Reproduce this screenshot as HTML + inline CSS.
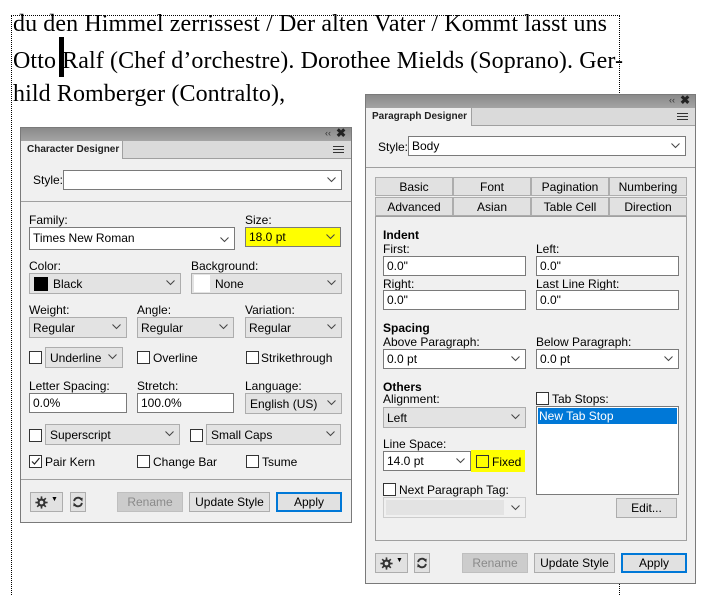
<!DOCTYPE html>
<html><head><meta charset="utf-8"><style>
*{box-sizing:border-box;margin:0;padding:0}
body{width:706px;height:595px;background:#fff;position:relative;overflow:hidden;font-family:"Liberation Sans",Arial,sans-serif;font-size:12px;color:#000}
.a{position:absolute}
.txt{font-family:"Liberation Serif","Times New Roman",serif;font-size:24px;white-space:nowrap;letter-spacing:0.1px}
.panel{position:absolute;background:#f0f0f0;border:1px solid #7a7a7a}
.tb{position:absolute;left:0;right:0;top:0;height:13px;background:linear-gradient(#8a8a8a,#a4a4a4)}
.tabrow{position:absolute;left:0;right:0;top:13px;height:18px;background:#dadada;border-bottom:1px solid #a0a0a0}
.tab{position:absolute;left:0;top:0;height:18px;background:#f0f0f0;border-right:1px solid #a0a0a0;font-size:10px;font-weight:bold;padding:3px 0 0 6px;color:#222;white-space:nowrap;overflow:hidden}
.inp{position:absolute;background:#fff;border:1px solid #7a7a7a;height:20px;padding:2px 0 0 3px;white-space:nowrap}
.dd{position:absolute;background:#e3e3e3;border:1px solid #adadad;height:21px;padding:3px 0 0 3px;white-space:nowrap}
.chev{position:absolute;right:5px;top:6px;width:9px;height:6px}
.lbl{position:absolute;white-space:nowrap}
.cb{position:absolute;width:13px;height:13px;background:#fff;border:1px solid #333}
.btn{position:absolute;height:20px;background:#e1e1e1;border:1px solid #adadad;text-align:center;padding-top:2px;white-space:nowrap}
.sep{position:absolute;height:1px;background:#a0a0a0}
.ptab{position:absolute;height:19px;background:#e1e1e1;border:1px solid #adadad;text-align:center;padding-top:2px}
b.h{position:absolute;font-size:12px}
</style></head><body>
<svg width="0" height="0" style="position:absolute"><defs>
<symbol id="cv" viewBox="0 0 9 6"><path d="M0.5 0.5L4.5 4.5L8.5 0.5" fill="none" stroke="#444" stroke-width="1"/></symbol>
<symbol id="gear" viewBox="0 0 16 16"><g fill="#333"><circle cx="8" cy="8" r="5"/><rect x="7" y="0.5" width="2" height="15"/><rect x="0.5" y="7" width="15" height="2"/><rect x="7" y="0.5" width="2" height="15" transform="rotate(45 8 8)"/><rect x="7" y="0.5" width="2" height="15" transform="rotate(-45 8 8)"/></g><circle cx="8" cy="8" r="2.3" fill="#e1e1e1"/></symbol>
<symbol id="ref" viewBox="0 0 14 14"><path d="M2.5 6A4.6 4.6 0 0 1 11 4.2" fill="none" stroke="#333" stroke-width="2.2"/><path d="M8.5 2.5L12.5 2L12 6.5Z" fill="#333"/><path d="M11.5 8A4.6 4.6 0 0 1 3 9.8" fill="none" stroke="#333" stroke-width="2.2"/><path d="M5.5 11.5L1.5 12L2 7.5Z" fill="#333"/></symbol>
</defs></svg>

<div class="a" style="left:11px;top:15px;width:609px;height:0;border-top:1px dotted #000"></div>
<div class="a" style="left:11px;top:15px;width:0;height:580px;border-left:1px dotted #000"></div>
<div class="a" style="left:619px;top:15px;width:0;height:580px;border-left:1px dotted #000"></div>

<div class="a txt" style="left:13px;top:11px">du den Himmel zerrissest / Der alten Vater / Kommt lasst uns</div>
<div class="a txt" style="left:13px;top:48px">Otto Ralf (Chef d’orchestre). Dorothee Mields (Soprano). Ger-</div>
<div class="a txt" style="left:13px;top:81px">hild Romberger (Contralto),</div>
<div class="a" style="left:59px;top:37px;width:5px;height:40px;background:#000"></div>

<div class="panel" style="left:20px;top:127px;width:332px;height:396px">
 <div class="tb"><span class="a" style="right:20px;top:0px;font-size:9px;color:#333">‹‹</span><span class="a" style="right:5px;top:-2px;font-size:12px;font-weight:bold;color:#222">✖</span></div>
 <div class="tabrow"><div class="tab" style="width:102px">Character Designer</div>
  <div class="a" style="right:7px;top:5px;width:11px;height:7px;border-top:1px solid #333;border-bottom:1px solid #333"><div style="margin-top:2px;border-top:1px solid #333"></div></div></div>
</div>
<div class="lbl" style="left:33px;top:173px">Style:</div>
<div class="inp" style="left:63px;top:170px;width:279px"><svg class="chev"><use href="#cv"/></svg></div>
<div class="sep" style="left:21px;top:201px;width:330px"></div>
<div class="lbl" style="left:29px;top:213px">Family:</div>
<div class="inp" style="left:29px;top:227px;width:206px;height:23px;padding-top:3px">Times New Roman<svg class="chev" style="top:9px"><use href="#cv"/></svg></div>
<div class="lbl" style="left:245px;top:213px">Size:</div>
<div class="inp" style="left:245px;top:227px;width:96px;background:#ffff00">18.0 pt<svg class="chev"><use href="#cv"/></svg></div>
<div class="lbl" style="left:29px;top:259px">Color:</div>
<div class="dd" style="left:29px;top:273px;width:152px;padding-left:23px">Black<div class="a" style="left:4px;top:3px;width:14px;height:14px;background:#000"></div><svg class="chev"><use href="#cv"/></svg></div>
<div class="lbl" style="left:191px;top:259px">Background:</div>
<div class="dd" style="left:191px;top:273px;width:151px;padding-left:23px">None<div class="a" style="left:2px;top:1px;width:16px;height:17px;background:#fff"></div><svg class="chev"><use href="#cv"/></svg></div>
<div class="lbl" style="left:29px;top:303px">Weight:</div>
<div class="lbl" style="left:137px;top:303px">Angle:</div>
<div class="lbl" style="left:245px;top:303px">Variation:</div>
<div class="dd" style="left:29px;top:317px;width:98px">Regular<svg class="chev"><use href="#cv"/></svg></div>
<div class="dd" style="left:137px;top:317px;width:97px">Regular<svg class="chev"><use href="#cv"/></svg></div>
<div class="dd" style="left:245px;top:317px;width:97px">Regular<svg class="chev"><use href="#cv"/></svg></div>
<div class="cb" style="left:29px;top:351px"></div>
<div class="dd" style="left:45px;top:347px;width:78px;padding-left:4px">Underline<svg class="chev"><use href="#cv"/></svg></div>
<div class="cb" style="left:137px;top:351px"></div><div class="lbl" style="left:153px;top:351px">Overline</div>
<div class="cb" style="left:246px;top:351px"></div><div class="lbl" style="left:261px;top:351px">Strikethrough</div>
<div class="lbl" style="left:29px;top:379px">Letter Spacing:</div>
<div class="lbl" style="left:137px;top:379px">Stretch:</div>
<div class="lbl" style="left:245px;top:379px">Language:</div>
<div class="inp" style="left:29px;top:393px;width:98px">0.0%</div>
<div class="inp" style="left:137px;top:393px;width:97px">100.0%</div>
<div class="dd" style="left:245px;top:393px;width:97px;padding-left:4px">English (US)<svg class="chev"><use href="#cv"/></svg></div>
<div class="cb" style="left:29px;top:429px"></div>
<div class="dd" style="left:45px;top:424px;width:135px;padding-left:4px">Superscript<svg class="chev"><use href="#cv"/></svg></div>
<div class="cb" style="left:190px;top:429px"></div>
<div class="dd" style="left:206px;top:424px;width:135px;padding-left:4px">Small Caps<svg class="chev"><use href="#cv"/></svg></div>
<div class="cb" style="left:29px;top:455px"><svg width="11" height="11" style="position:absolute;left:0;top:0"><path d="M2 5.5L4.5 8L9.5 2" fill="none" stroke="#222" stroke-width="1.2"/></svg></div><div class="lbl" style="left:45px;top:455px">Pair Kern</div>
<div class="cb" style="left:137px;top:455px"></div><div class="lbl" style="left:153px;top:455px">Change Bar</div>
<div class="cb" style="left:246px;top:455px"></div><div class="lbl" style="left:262px;top:455px">Tsume</div>
<div class="sep" style="left:21px;top:479px;width:330px"></div>
<div class="btn" style="left:30px;top:492px;width:33px"><svg width="13" height="13" style="position:absolute;left:4px;top:3px"><use href="#gear"/></svg><span class="a" style="left:20px;top:3px;font-size:7px">▼</span></div>
<div class="btn" style="left:70px;top:492px;width:16px"><svg width="12" height="12" style="position:absolute;left:1px;top:3px"><use href="#ref"/></svg></div>
<div class="btn" style="left:117px;top:492px;width:66px;background:#cccccc;color:#8a8a8a;border-color:#bfbfbf">Rename</div>
<div class="btn" style="left:189px;top:492px;width:81px">Update Style</div>
<div class="btn" style="left:276px;top:492px;width:66px;border:2px solid #0078d7;padding-top:1px">Apply</div>

<div class="panel" style="left:365px;top:94px;width:331px;height:490px">
 <div class="tb"><span class="a" style="right:20px;top:0px;font-size:9px;color:#333">‹‹</span><span class="a" style="right:5px;top:-2px;font-size:12px;font-weight:bold;color:#222">✖</span></div>
 <div class="tabrow"><div class="tab" style="width:106px">Paragraph Designer</div>
  <div class="a" style="right:7px;top:5px;width:11px;height:7px;border-top:1px solid #333;border-bottom:1px solid #333"><div style="margin-top:2px;border-top:1px solid #333"></div></div></div>
</div>
<div class="lbl" style="left:378px;top:140px">Style:</div>
<div class="inp" style="left:408px;top:136px;width:278px">Body<svg class="chev"><use href="#cv"/></svg></div>
<div class="sep" style="left:366px;top:167px;width:329px"></div>
<div class="ptab" style="left:375px;top:177px;width:78px">Basic</div>
<div class="ptab" style="left:453px;top:177px;width:78px">Font</div>
<div class="ptab" style="left:531px;top:177px;width:78px">Pagination</div>
<div class="ptab" style="left:609px;top:177px;width:78px">Numbering</div>
<div class="ptab" style="left:375px;top:197px;width:78px">Advanced</div>
<div class="ptab" style="left:453px;top:197px;width:78px">Asian</div>
<div class="ptab" style="left:531px;top:197px;width:78px">Table Cell</div>
<div class="ptab" style="left:609px;top:197px;width:78px">Direction</div>
<div class="a" style="left:375px;top:216px;width:312px;height:325px;border:1px solid #a0a0a0;background:#f0f0f0"></div>
<b class="h" style="left:383px;top:228px">Indent</b>
<div class="lbl" style="left:383px;top:242px">First:</div>
<div class="lbl" style="left:536px;top:242px">Left:</div>
<div class="inp" style="left:383px;top:256px;width:143px">0.0"</div>
<div class="inp" style="left:536px;top:256px;width:143px">0.0"</div>
<div class="lbl" style="left:383px;top:277px">Right:</div>
<div class="lbl" style="left:536px;top:277px">Last Line Right:</div>
<div class="inp" style="left:383px;top:290px;width:143px">0.0"</div>
<div class="inp" style="left:536px;top:290px;width:143px">0.0"</div>
<b class="h" style="left:383px;top:321px">Spacing</b>
<div class="lbl" style="left:383px;top:335px">Above Paragraph:</div>
<div class="lbl" style="left:536px;top:335px">Below Paragraph:</div>
<div class="inp" style="left:383px;top:349px;width:143px">0.0 pt<svg class="chev"><use href="#cv"/></svg></div>
<div class="inp" style="left:536px;top:349px;width:143px">0.0 pt<svg class="chev"><use href="#cv"/></svg></div>
<b class="h" style="left:383px;top:380px">Others</b>
<div class="lbl" style="left:383px;top:392px">Alignment:</div>
<div class="dd" style="left:383px;top:407px;width:143px">Left<svg class="chev"><use href="#cv"/></svg></div>
<div class="cb" style="left:536px;top:392px"></div><div class="lbl" style="left:552px;top:392px">Tab Stops:</div>
<div class="a" style="left:536px;top:406px;width:143px;height:89px;background:#fff;border:1px solid #7a7a7a"><div style="margin:1px;height:16px;background:#0078d7;color:#fff;padding:1px 0 0 1px">New Tab Stop</div></div>
<div class="lbl" style="left:383px;top:437px">Line Space:</div>
<div class="inp" style="left:383px;top:451px;width:88px">14.0 pt<svg class="chev"><use href="#cv"/></svg></div>
<div class="a" style="left:471px;top:450px;width:54px;height:22px;background:#ffff00"></div>
<div class="cb" style="left:476px;top:455px;background:#ffff00"></div><div class="lbl" style="left:492px;top:455px">Fixed</div>
<div class="cb" style="left:383px;top:483px"></div><div class="lbl" style="left:399px;top:483px">Next Paragraph Tag:</div>
<div class="a" style="left:383px;top:497px;width:143px;height:21px;background:#f0f0f0;border:1px solid #ccc"><div style="margin:2px;width:118px;height:15px;background:#e3e3e3"></div><svg class="chev" style="top:7px"><use href="#cv"/></svg></div>
<div class="btn" style="left:616px;top:498px;width:61px">Edit...</div>
<div class="btn" style="left:375px;top:553px;width:33px"><svg width="13" height="13" style="position:absolute;left:4px;top:3px"><use href="#gear"/></svg><span class="a" style="left:20px;top:3px;font-size:7px">▼</span></div>
<div class="btn" style="left:414px;top:553px;width:16px"><svg width="12" height="12" style="position:absolute;left:1px;top:3px"><use href="#ref"/></svg></div>
<div class="btn" style="left:462px;top:553px;width:66px;background:#cccccc;color:#8a8a8a;border-color:#bfbfbf">Rename</div>
<div class="btn" style="left:534px;top:553px;width:81px">Update Style</div>
<div class="btn" style="left:621px;top:553px;width:66px;border:2px solid #0078d7;padding-top:1px">Apply</div>
</body></html>
